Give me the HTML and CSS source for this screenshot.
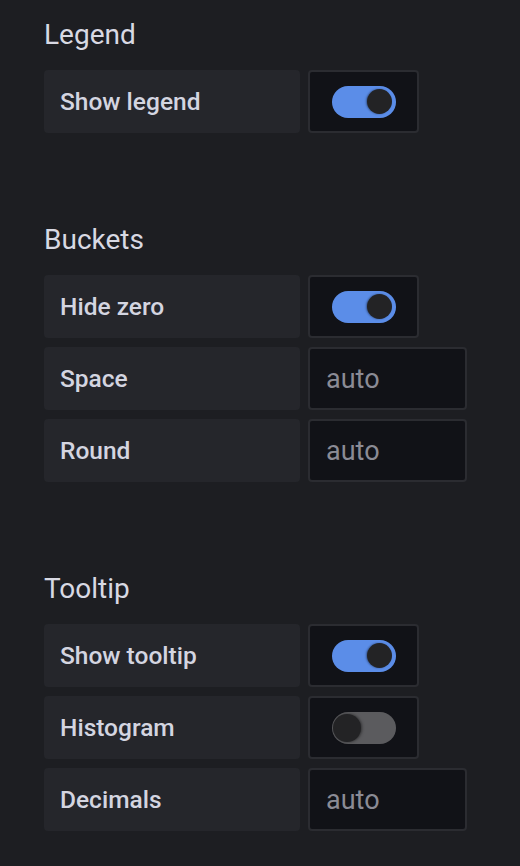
FILE: index.html
```html
<!DOCTYPE html>
<html>
<head>
<meta charset="utf-8">
<link rel="stylesheet" href="styles.css">
</head>
<body>
<div class="panel">
  <section class="section">
    <h3 class="heading">Legend</h3>
    <div class="rows">
      <div class="row">
        <div class="label">Show legend</div>
        <div class="switch-box"><span class="toggle on"><span class="knob"></span></span></div>
      </div>
    </div>
  </section>
  <section class="section">
    <h3 class="heading">Buckets</h3>
    <div class="rows">
      <div class="row">
        <div class="label">Hide zero</div>
        <div class="switch-box"><span class="toggle on"><span class="knob"></span></span></div>
      </div>
      <div class="row">
        <div class="label">Space</div>
        <input class="input" type="text" placeholder="auto">
      </div>
      <div class="row">
        <div class="label">Round</div>
        <input class="input" type="text" placeholder="auto">
      </div>
    </div>
  </section>
  <section class="section">
    <h3 class="heading">Tooltip</h3>
    <div class="rows">
      <div class="row">
        <div class="label">Show tooltip</div>
        <div class="switch-box"><span class="toggle on"><span class="knob"></span></span></div>
      </div>
      <div class="row">
        <div class="label">Histogram</div>
        <div class="switch-box"><span class="toggle off"><span class="knob"></span></span></div>
      </div>
      <div class="row">
        <div class="label">Decimals</div>
        <input class="input" type="text" placeholder="auto">
      </div>
    </div>
  </section>
</div>
</body>
</html>
```

FILE: styles.css
```css
html, body {
  margin: 0;
  padding: 0;
  background: #1d1e22;
}
body {
  font-family: Roboto, "Noto Sans", sans-serif;
  color: #d4d4de;
}
.panel {
  padding: 19px 0 0 44px;
  display: flex;
  flex-direction: column;
  gap: 91px;
}
.heading {
  margin: 0 0 19px;
  font-size: 28px;
  line-height: 32px;
  font-weight: 400;
  color: #d8d9e3;
}
.rows {
  display: flex;
  flex-direction: column;
  gap: 9px;
}
.row {
  display: flex;
  gap: 8px;
  height: 63px;
}
.label {
  width: 256px;
  box-sizing: border-box;
  padding-left: 16px;
  background: #25262b;
  border-radius: 4px;
  display: flex;
  align-items: center;
  font-size: 24.5px;
  font-weight: 500;
  color: #d4d5e0;
}
.switch-box {
  width: 111px;
  box-sizing: border-box;
  background: #111217;
  border: 2px solid #2b2c31;
  border-radius: 4px;
  display: flex;
  align-items: center;
  justify-content: center;
}
.toggle {
  position: relative;
  width: 64px;
  height: 32px;
  border-radius: 16px;
  display: block;
}
.toggle.on {
  background: #5b8de8;
}
.toggle.off {
  background: #5b5b5e;
}
.knob {
  position: absolute;
  top: 3.5px;
  width: 25px;
  height: 25px;
  border-radius: 50%;
  background: #232325;
}
.toggle.on .knob {
  right: 4px;
  box-shadow: -1px 0 2px rgba(0,0,0,0.4);
}
.toggle.off .knob {
  left: 1px;
  top: 2px;
  width: 28px;
  height: 28px;
  box-shadow: 1px 0 3px rgba(0,0,0,0.5);
}
.input {
  width: 159px;
  box-sizing: border-box;
  background: #111217;
  border: 2px solid #2b2c31;
  border-radius: 4px;
  padding: 0 0 0 16px;
  font-family: Roboto, "Noto Sans", sans-serif;
  font-size: 27px;
  color: #d4d5e0;
  outline: none;
}
.input::placeholder {
  color: #8b8b95;
}
```
